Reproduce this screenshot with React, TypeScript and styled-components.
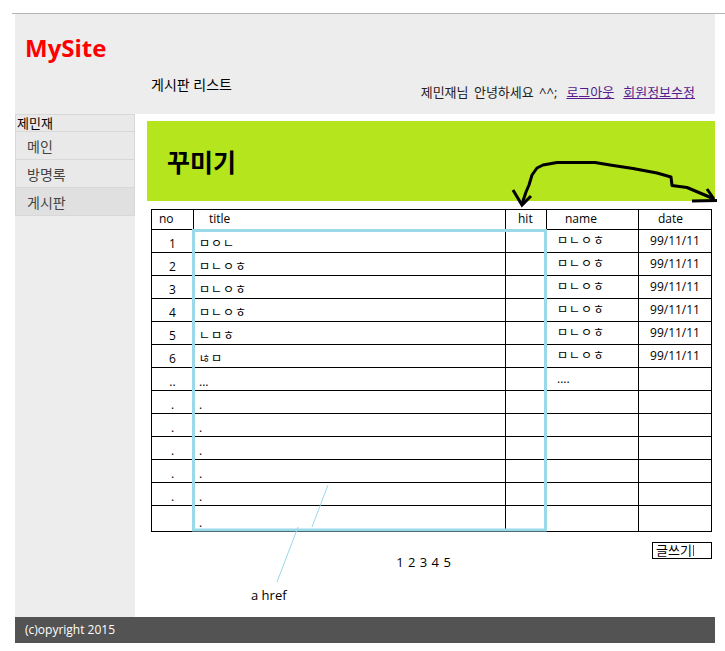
import React from "react";
import styled, { createGlobalStyle } from "styled-components";

const GlobalStyle = createGlobalStyle`
  html, body { margin: 0; padding: 0; background: #fff; }
  body { font-family: "Open Sans", "Noto Sans CJK KR", sans-serif; color: #000; }
  * { box-sizing: border-box; }
`;

const Root = styled.div`
  position: relative;
  width: 725px;
  height: 651px;
  overflow: hidden;
`;

const TopRule = styled.div`
  margin: 13px 0 0 12px;
  height: 1px;
  background: #b4b4b4;
`;

const Page = styled.div`
  margin-left: 15px;
  width: 700px;
`;

const Header = styled.header`
  height: 100px;
  background: #ededed;
  padding-top: 18px;
`;

const Logo = styled.h1`
  margin: 0;
  padding-left: 10px;
  font: 700 24px/32px "Open Sans", sans-serif;
  color: #ff0000;
`;

const NavRow = styled.div`
  display: flex;
  justify-content: space-between;
  align-items: flex-start;
  padding: 0 20px 0 136px;
`;

const PageTitle = styled.div`
  margin-top: 11px;
  font-size: 14px;
  line-height: 20px;
`;

const UserBox = styled.div`
  margin-top: 18px;
  font-size: 13px;
  line-height: 20px;
  color: #222;
  word-spacing: 2px;
`;

const UserLink = styled.a`
  margin-left: 9px;
  color: #551a8b;
  text-decoration: underline;
`;

const Body = styled.div`
  display: flex;
  height: 503px;
`;

const Sidebar = styled.nav`
  width: 120px;
  background: #ededed;
`;

const Menu = styled.ul`
  margin: 0;
  padding: 0;
  list-style: none;
  border-top: 1px solid #d8d8d8;
`;

const UserName = styled.li`
  border: 1px solid #d8d8d8;
  border-top: none;
  background: #e9e9e9;
  font-size: 13px;
  line-height: 16px;
  padding-left: 1px;
`;

const MenuItem = styled.li<{ $active?: boolean }>`
  border: 1px solid #d8d8d8;
  border-top: none;
  background: ${(p) => (p.$active ? "#e0e0e0" : "#e9e9e9")};
  font-size: 14px;
  line-height: 27px;
  padding: 1px 0 0 11px;
  height: 28px;
  color: #444;
`;

const Main = styled.main`
  flex: 1;
  background: #fff;
  padding: 7px 0 0 12px;
`;

const Banner = styled.div`
  height: 80px;
  background: #b5e61d;
  padding: 25px 0 0 20px;
`;

const BannerTitle = styled.h2`
  margin: 0;
  font: 700 25px/32px "Open Sans", "Noto Sans CJK KR", sans-serif;
`;

const Board = styled.table`
  margin: 8px 0 0 4px;
  width: 560px;
  border-collapse: collapse;
  table-layout: fixed;
  font-size: 12px;
`;

const HeadCell = styled.th<{ $pad: number }>`
  border: 1px solid #000;
  height: 20px;
  padding: 0 0 0 ${(p) => p.$pad}px;
  font-weight: 400;
  text-align: left;
  vertical-align: top;
  line-height: 18px;
`;

const Row = styled.tr<{ $h: number }>`
  height: ${(p) => p.$h}px;
`;

const Cell = styled.td<{ $align?: "left" | "center"; $pad?: number; $top?: boolean; $jamo?: boolean }>`
  border: 1px solid #000;
  padding: ${(p) => (p.$top ? "3px" : "0")} 0 0 ${(p) => p.$pad ?? 0}px;
  text-align: ${(p) => p.$align ?? "left"};
  vertical-align: ${(p) => (p.$top ? "top" : "bottom")};
  line-height: 16px;
  letter-spacing: ${(p) => (p.$jamo ? "1px" : "0")};
  white-space: nowrap;
  overflow: hidden;
`;

const BottomRow = styled.div`
  display: grid;
  grid-template-columns: 1fr auto 1fr;
  align-items: start;
  margin: 10px 0 0 -12px;
  padding-right: 3px;
`;

const Pager = styled.div`
  grid-column: 2;
  margin-top: 12px;
  font-size: 13px;
  line-height: 16px;
  word-spacing: 1px;
`;

const WriteButton = styled.button`
  grid-column: 3;
  justify-self: end;
  width: 60px;
  height: 17px;
  margin: 0;
  padding: 0 0 0 3px;
  border: 1px solid #000;
  background: #fff;
  font: 13px/15px "Open Sans", "Noto Sans CJK KR", sans-serif;
  text-align: left;
  display: flex;
  align-items: center;
`;

const Caret = styled.span`
  display: inline-block;
  width: 1px;
  height: 11px;
  background: #6a3aa2;
  margin-left: 1px;
`;

const Footer = styled.footer`
  height: 26px;
  background: #535353;
  color: #fff;
  font-size: 12px;
  line-height: 26px;
  padding-left: 10px;
`;

const Overlay = styled.svg`
  position: absolute;
  top: 0;
  left: 0;
  pointer-events: none;
`;

const Note = styled.span`
  position: absolute;
  left: 251px;
  top: 587px;
  font-size: 13px;
  line-height: 16px;
`;

type R = { no: string; title: string; name: string; date: string };

const rows: R[] = [
  { no: "1", title: "ㅁㅇㄴ", name: "ㅁㄴㅇㅎ", date: "99/11/11" },
  { no: "2", title: "ㅁㄴㅇㅎ", name: "ㅁㄴㅇㅎ", date: "99/11/11" },
  { no: "3", title: "ㅁㄴㅇㅎ", name: "ㅁㄴㅇㅎ", date: "99/11/11" },
  { no: "4", title: "ㅁㄴㅇㅎ", name: "ㅁㄴㅇㅎ", date: "99/11/11" },
  { no: "5", title: "ㄴㅁㅎ", name: "ㅁㄴㅇㅎ", date: "99/11/11" },
  { no: "6", title: "ㄶㅁ", name: "ㅁㄴㅇㅎ", date: "99/11/11" },
  { no: "..", title: "...", name: "....", date: "" },
  { no: ".", title: ".", name: "", date: "" },
  { no: ".", title: ".", name: "", date: "" },
  { no: ".", title: ".", name: "", date: "" },
  { no: ".", title: ".", name: "", date: "" },
  { no: ".", title: ".", name: "", date: "" },
  { no: "", title: ".", name: "", date: "" },
];

const isJamo = (s: string) => /[\u3131-\u318e]/.test(s);

export default function App() {
  return (
    <Root>
      <GlobalStyle />
      <TopRule />
      <Page>
        <Header>
          <Logo>MySite</Logo>
          <NavRow>
            <PageTitle>게시판 리스트</PageTitle>
            <UserBox>
              제민재님 안녕하세요 ^^;
              <UserLink href="#">로그아웃</UserLink>
              <UserLink href="#">회원정보수정</UserLink>
            </UserBox>
          </NavRow>
        </Header>
        <Body>
          <Sidebar>
            <Menu>
              <UserName>제민재</UserName>
              <MenuItem>메인</MenuItem>
              <MenuItem>방명록</MenuItem>
              <MenuItem $active>게시판</MenuItem>
            </Menu>
          </Sidebar>
          <Main>
            <Banner>
              <BannerTitle>꾸미기</BannerTitle>
            </Banner>
            <Board>
              <colgroup>
                <col style={{ width: 42 }} />
                <col style={{ width: 312 }} />
                <col style={{ width: 41 }} />
                <col style={{ width: 92 }} />
                <col style={{ width: 73 }} />
              </colgroup>
              <thead>
                <tr>
                  <HeadCell $pad={7}>no</HeadCell>
                  <HeadCell $pad={15}>title</HeadCell>
                  <HeadCell $pad={12}>hit</HeadCell>
                  <HeadCell $pad={18}>name</HeadCell>
                  <HeadCell $pad={19}>date</HeadCell>
                </tr>
              </thead>
              <tbody>
                {rows.map((r, i) => (
                  <Row key={i} $h={i === rows.length - 1 ? 26 : 23}>
                    <Cell $align="center">{r.no}</Cell>
                    <Cell $pad={5} $jamo={isJamo(r.title)}>{r.title}</Cell>
                    <Cell />
                    <Cell $top $pad={10} $jamo={isJamo(r.name)}>{r.name}</Cell>
                    <Cell $top $align="center">{r.date}</Cell>
                  </Row>
                ))}
              </tbody>
            </Board>
            <BottomRow>
              <Pager>1 2 3 4 5</Pager>
              <WriteButton type="button">
                글쓰기
                <Caret />
              </WriteButton>
            </BottomRow>
          </Main>
        </Body>
        <Footer>(c)opyright 2015</Footer>
      </Page>
      <Overlay width="725" height="651" viewBox="0 0 725 651">
        <rect x="193.5" y="230.5" width="352" height="299.5" fill="none" stroke="#99d9ea" strokeWidth="3" />
        <path d="M328 485 L312 527 M298 527 L277 582" stroke="#99d9ea" strokeWidth="1" fill="none" />
        <path
          d="M522 204 L526 192 L529 185 L532 175 L537 168 L543 165 L557 162.5 L595 162.5 L610 165 L633 168.5 L657 173 L671 177 L672 185.5 L687 187.5 L713 198.5"
          stroke="#000"
          strokeWidth="3"
          fill="none"
          strokeLinejoin="round"
        />
        <path d="M513 190 L522 205 L531 196" stroke="#000" strokeWidth="3" fill="none" />
        <path d="M707 189 L714 199 M692 201 L717 200.5" stroke="#000" strokeWidth="3" fill="none" />
      </Overlay>
      <Note>a href</Note>
    </Root>
  );
}
